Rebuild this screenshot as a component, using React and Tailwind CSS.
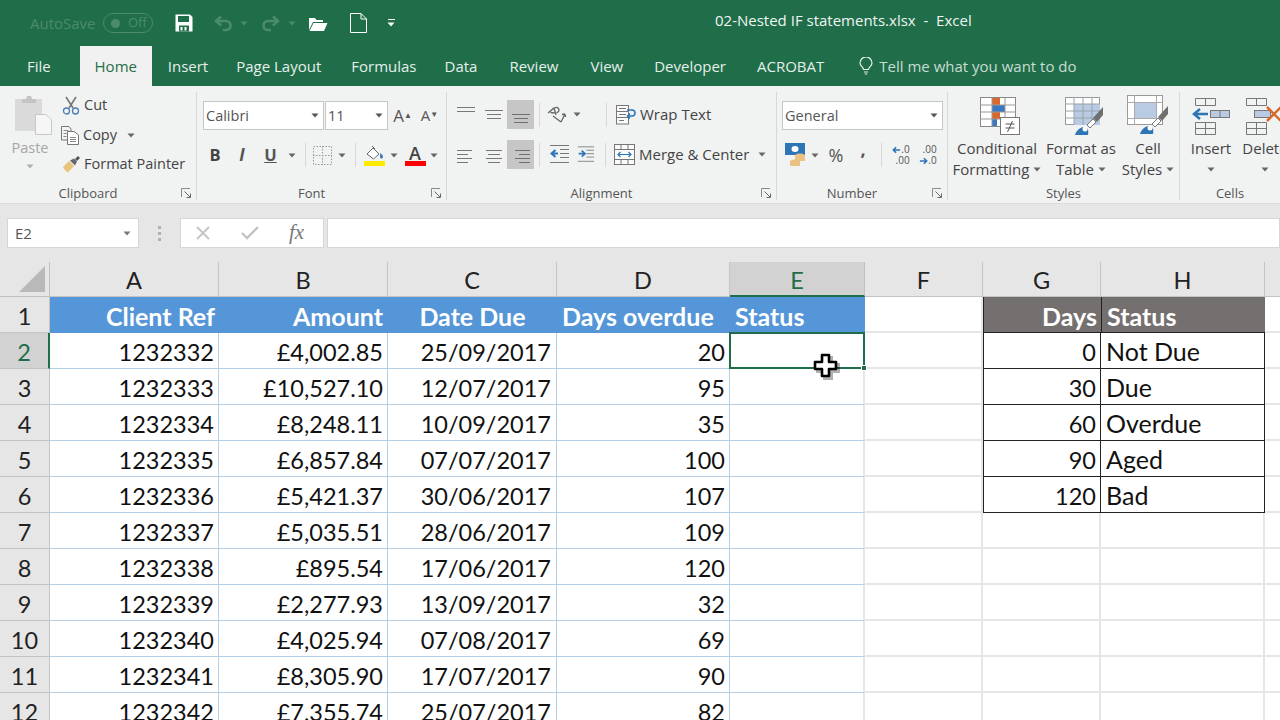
import React from "react";

const ui = { fontFamily: '"Open Sans", "Noto Sans", sans-serif' };
const sheet = { fontFamily: 'Lato, "Noto Sans", sans-serif' };

const Caret = ({ c = "#666", className = "" }) => (
  <svg width="8" height="5" viewBox="0 0 8 5" className={className}><path d="M0.5 0.5h7L4 4.5z" fill={c} /></svg>
);

const Launcher = () => (
  <svg width="11" height="11" viewBox="0 0 11 11" fill="none" stroke="#8a8a8a">
    <path d="M0.5 9V0.5H9" /><path d="M3.5 3.5L9 9M9.5 5.5V9.5H5.5" stroke="#666" />
  </svg>
);

const Group = ({ w, label, launcher = true, border = true, children }) => (
  <div className={`flex flex-col shrink-0 h-[108px] ${w} ${border ? "border-r border-[#d8d8d8]" : ""}`}>
    <div className="h-[90px]">{children}</div>
    <div className="flex h-[18px] pt-[4px] items-center">
      <div className="flex-1 text-center text-[13px] leading-[18px] text-[#555]">{label}</div>
      {launcher && <div className="w-[20px] flex justify-center"><Launcher /></div>}
    </div>
  </div>
);

const Slot = ({ w, children, className = "" }) => (
  <div className={`flex items-center justify-center shrink-0 h-full ${w} ${className}`}>{children}</div>
);

const Sep = ({ h = "h-[24px]" }) => <div className={`w-px ${h} bg-[#d8d8d8] shrink-0`} />;

const Lines = ({ rows, sel }) => (
  <svg width="20" height="20" viewBox="0 0 20 20" stroke={sel ? "#6f6f6f" : "#777"} strokeWidth="1">
    {rows.map(([x1, x2, y]) => <line key={y + "" + x1} x1={x1} x2={x2} y1={y + 0.5} y2={y + 0.5} />)}
  </svg>
);

const Save = () => (
  <svg width="18" height="18" viewBox="0 0 18 18">
    <path d="M0.5 0.5H15L17.5 3V17.5H0.5z" fill="#fff" />
    <rect x="3" y="2" width="11" height="6" fill="#1f6e49" />
    <rect x="4" y="11.5" width="10" height="6" fill="#1f6e49" />
    <rect x="5.5" y="13" width="2" height="3.5" fill="#fff" /><rect x="9.5" y="13" width="2" height="3.5" fill="#fff" />
  </svg>
);

const Undo = ({ flip }) => (
  <svg width="19" height="17" viewBox="0 0 19 17" fill="none" stroke="#4b8b6c" strokeWidth="2.6" className={flip ? "-scale-x-100" : ""}>
    <path d="M7 1.5L2 6l5 4.5" /><path d="M2.5 6H12c6 0 6 9 0 9H9" />
  </svg>
);

const Folder = () => (
  <svg width="20" height="17" viewBox="0 0 20 17">
    <path d="M1 15V3h6l1.5 2H15v2H5L1 15z" fill="#fff" /><path d="M5.5 8H19.5L16 16H1.5z" fill="#fff" />
  </svg>
);

const Doc = () => (
  <svg width="17" height="20" viewBox="0 0 17 20" fill="none" stroke="#fff" strokeWidth="1">
    <path d="M0.5 0.5H11L16.5 6V19.5H0.5z" /><path d="M11 0.5V6H16.5" />
  </svg>
);

const Bulb = () => (
  <svg width="14" height="18" viewBox="0 0 14 18" fill="none" stroke="#e8f0ec" strokeWidth="1.2">
    <path d="M4.5 12.5C4.5 10 1 9 1 6a6 6 0 0 1 12 0c0 3-3.5 4-3.5 6.500z" /><path d="M5 15h4M5.800 17h2.400" />
  </svg>
);

const PasteIcon = () => (
  <svg width="38" height="40" viewBox="0 0 38 40">
    <rect x="1" y="4" width="27" height="32" fill="#dadada" />
    <path d="M8 4h4l1-3h4l1 3h4v4H8z" fill="#c4c4c4" />
    <path d="M21.500 19.500H32l5.500 5.500V39.500H21.500z" fill="#f6f6f6" stroke="#c8c8c8" />
  </svg>
);

const Scissors = () => (
  <svg width="18" height="19" viewBox="0 0 18 19" fill="none">
    <path d="M4 1l7 11M14 1L7 12" stroke="#777" strokeWidth="1.600" />
    <circle cx="4.500" cy="15" r="3" stroke="#4a7ebb" strokeWidth="1.300" /><circle cx="13.500" cy="15" r="3" stroke="#4a7ebb" strokeWidth="1.300" />
  </svg>
);

const CopyIcon = () => (
  <svg width="18" height="19" viewBox="0 0 18 19" fill="none" stroke="#777">
    <path d="M0.500 0.500H8L10 3V14H0.500z" fill="#f3f3f3" />
    <path d="M6.500 5.500H13L17.500 9V18.500H6.500z" fill="#fff" />
    <path d="M2.500 4.500h5M2.500 7.500h3M2.500 10.500h3M9 11.500h6M9 13.500h6M9 15.500h6" stroke="#888" />
  </svg>
);

const Painter = () => (
  <svg width="19" height="17" viewBox="0 0 19 17">
    <path d="M1 11l6-6 5 5-6 6.500C4 16 2 13 1 11z" fill="#e8c47c" />
    <path d="M8 4.500l4-2 3 3-2 4z" fill="#666" /><path d="M13 3l3-3 2 2-3 3z" fill="#555" />
  </svg>
);

const BorderIcon = () => (
  <svg width="19" height="19" viewBox="0 0 19 19" fill="none" stroke="#999" strokeDasharray="1.500 1.500">
    <rect x="0.500" y="0.500" width="18" height="18" /><path d="M9.500 0v19M0 9.500h19" />
  </svg>
);

const FillIcon = () => (
  <svg width="21" height="21" viewBox="0 0 21 21">
    <path d="M3 9l6-6 6 6-5.500 5z" fill="#fff" stroke="#666" /><path d="M8 1l3 3" stroke="#666" />
    <path d="M16.500 8c2 2 2.500 3 2.500 4a1.500 1.500 0 0 1-3 0c0-1 0-2 .500-4z" fill="#3f78b8" />
    <rect x="0" y="16" width="21" height="5" fill="#ffea00" />
  </svg>
);

const FontColor = () => (
  <div className="flex flex-col items-center w-[21px]">
    <span className="text-[18px] leading-[16px] text-[#444] font-semibold">A</span>
    <div className="w-[21px] h-[5px] bg-[#ff0000]" />
  </div>
);

const Orient = () => (
  <svg width="20" height="20" viewBox="0 0 20 20" fill="none" stroke="#666" strokeWidth="1.300">
    <path d="M1 8l6-5 2 7M3.500 7.500l4 .5" /><path d="M8 3a2.500 2.500 0 0 1 3.500 3.500L9.500 8" />
    <path d="M6 11l8 6M14 17l4-8M18 9l-3 .5M18 9l.500 3" />
  </svg>
);

const WrapIcon = () => (
  <svg width="20" height="20" viewBox="0 0 20 20" fill="none" stroke="#777">
    <rect x="0.500" y="0.500" width="12" height="18.500" fill="#fafafa" />
    <path d="M0.500 6.500h12M0.500 12.500h12M3 3.500h7M3 9.500h7M3 15.500h5" />
    <path d="M11 5h5a2.500 2.500 0 0 1 0 6h-4M14 8.500L11.500 11l2.500 2.500" stroke="#2e75b6" strokeWidth="1.500" />
  </svg>
);

const MergeIcon = () => (
  <svg width="21" height="21" viewBox="0 0 21 21" fill="none" stroke="#777">
    <rect x="0.500" y="0.500" width="20" height="20" fill="#fafafa" />
    <path d="M0.500 5.500h20M0.500 15.500h20M7 0.500v5M14 0.500v5M7 15.500v5M14 15.500v5" />
    <path d="M4 10.500h13M6.500 8L4 10.500 6.500 13M14.500 8l2.500 2.500-2.500 2.500" stroke="#2e75b6" strokeWidth="1.200" />
  </svg>
);

const Indent = ({ flip }) => (
  <svg width="20" height="19" viewBox="0 0 20 19">
    <g stroke="#777"><path d="M1 0.500h19M11 4.500h9M11 8.500h9M11 12.500h9M1 17.500h19" /></g>
    <path d={flip ? "M2 8.500h6M5.500 5l4 3.500-4 3.500" : "M9 8.500H3M6.500 5l-4 3.500 4 3.500"} fill="none" stroke="#2e75b6" strokeWidth="2" />
  </svg>
);

const Accounting = () => (
  <svg width="22" height="24" viewBox="0 0 22 24">
    <rect x="0" y="0" width="20" height="12" fill="#2e75b6" /><ellipse cx="10" cy="6" rx="3.500" ry="3" fill="#fff" />
    <ellipse cx="15" cy="13" rx="5" ry="2.500" fill="#eac282" /><ellipse cx="10" cy="19" rx="5" ry="2.500" fill="#eac282" /><rect x="5" y="18" width="10" height="5" fill="#eac282" /><rect x="10" y="13" width="10" height="5" fill="#eac282" />
  </svg>
);

const Decimals = ({ inc }) => (
  <div className="flex flex-col items-end text-[10px] leading-[11px] text-[#555]">
    <div className="flex items-center h-[11px]">
      {inc && <svg width="9" height="8" viewBox="0 0 10 8"><path d="M9 4H2M4.500 1L1.500 4l3 3" fill="none" stroke="#2e75b6" strokeWidth="1.800" /></svg>}
      <div className="h-[11px] overflow-hidden">{inc ? ".0" : ".00"}</div>
    </div>
    <div className="flex items-center h-[11px]">
      {!inc && <svg width="9" height="8" viewBox="0 0 10 8"><path d="M1 4h7M5.500 1l3 3-3 3" fill="none" stroke="#2e75b6" strokeWidth="1.800" /></svg>}
      <div className="h-[11px] overflow-hidden">{inc ? ".00" : ".0"}</div>
    </div>
  </div>
);

const CondFmt = () => (
  <svg width="40" height="38" viewBox="0 0 40 38">
    <rect x="0.500" y="0.500" width="35" height="29" fill="#fff" stroke="#888" />
    <rect x="12" y="1" width="8" height="7" fill="#d9692b" /><rect x="12" y="8" width="13" height="7" fill="#3a78c2" /><rect x="12" y="15" width="8" height="7" fill="#d9692b" /><rect x="12" y="22" width="5" height="7" fill="#3a78c2" />
    <path d="M12 0.500v29M25 0.500v29M0 8h36M0 15h36M0 22h36" stroke="#999" fill="none" />
    <rect x="20.500" y="20.500" width="19" height="17" fill="#fff" stroke="#777" />
    <path d="M25.500 27h9M25.500 31h9M32.500 24l-5 11" stroke="#555" fill="none" />
  </svg>
);

const Brush = () => (
  <g>
    <path d="M10 38c1-4 5-8 9-8 3 0 5 2 4 8z" fill="#2e75b6" /><circle cx="20" cy="32" r="2.500" fill="#fff" />
    <path d="M22 28l6-6 3 3-6 6z" fill="#fff" stroke="#777" /><path d="M28 21l10-11v8l-6 7z" fill="#6f6f6f" />
  </g>
);

const FmtTable = () => (
  <svg width="40" height="38" viewBox="0 0 40 38">
    <rect x="0.500" y="0.500" width="34" height="27" fill="#fff" stroke="#999" />
    <rect x="9" y="7" width="26" height="21" fill="#b9cbe2" />
    <path d="M9 0v28M18 0v28M27 0v28M0 7h35M0 14h35M0 21h35" stroke="#9aa3ad" fill="none" />
    <Brush />
  </svg>
);

const CellStyle = () => (
  <svg width="42" height="40" viewBox="0 0 42 40">
    <rect x="0.500" y="0.500" width="35" height="29" fill="#fff" stroke="#999" />
    <rect x="8" y="8" width="22" height="15" fill="#b9cbe2" />
    <path d="M0 7.500h36M0 23.500h36M7.500 0v30M29.500 0v30" stroke="#aaa" fill="none" />
    <g transform="translate(3 1)"><Brush /></g>
  </svg>
);

const InsertIcon = () => (
  <svg width="38" height="37" viewBox="0 0 38 37" fill="none" stroke="#777">
    <path d="M3.500 0.500h20v7h-20zM13.500 0.500v7M3.500 24.500h20v12h-20zM13.500 24.500v12M3.500 30.500h20" />
    <rect x="18.500" y="12.500" width="19" height="7" fill="#b9cbe2" /><path d="M28 12.500v7" />
    <path d="M16 16H3M8 11L2 16l6 5" stroke="#2e75b6" strokeWidth="2.500" />
  </svg>
);

const DeleteIcon = () => (
  <svg width="40" height="37" viewBox="0 0 40 37" fill="none" stroke="#777">
    <path d="M1.500 0.500h20v7h-20zM11.500 0.500v7M1.500 24.500h20v12h-20zM11.500 24.500v12M1.500 30.500h20" />
    <rect x="9.500" y="12.500" width="16" height="7" fill="#b9cbe2" />
    <path d="M22 9l14 14M36 9L22 23" stroke="#d9692b" strokeWidth="2.500" />
  </svg>
);

const BigBtn = ({ w, icon, l1, l2, iconPad = "" }) => (
  <div className={`flex flex-col items-center shrink-0 ${w}`}>
    <div className={`h-[43px] flex items-end justify-center ${iconPad}`}>{icon}</div>
    <div className="text-[15px] leading-[21px] text-[#444] mt-[3px] whitespace-nowrap">{l1}</div>
    <div className="text-[15px] leading-[21px] text-[#444] whitespace-nowrap flex items-center gap-[4px] h-[21px]">
      {l2}<Caret />
    </div>
  </div>
);

const Box = ({ w, text, cw = "w-[16px]" }) => (
  <div className={`${w} h-[29px] shrink-0 bg-white border border-[#c6c6c6] flex items-center pl-[2px] text-[14.500px] text-[#555]`}>
    <span className="flex-1">{text}</span>
    <Slot w={cw}><Caret c="#555" /></Slot>
  </div>
);

const tabs = [
  ["File", "ml-[27px]"], ["Home", ""], ["Insert", "ml-[16px]"], ["Page Layout", "ml-[28px]"], ["Formulas", "ml-[30px]"],
  ["Data", "ml-[28px]"], ["Review", "ml-[32px]"], ["View", "ml-[32px]"], ["Developer", "ml-[31px]"], ["ACROBAT", "ml-[31px]"],
];

const TitleBar = () => (
  <div className="h-[46px] bg-[#1f6e49] flex items-center relative shrink-0">
    <span className="ml-[30px] text-[15px] text-[#4b8b6c] w-[73px]">AutoSave</span>
    <div className="w-[50px] h-[20px] rounded-full border border-[#4b8b6c] flex items-center pl-[7px] gap-[8px]">
      <span className="w-[9px] h-[9px] rounded-full bg-[#4b8b6c]" />
      <span className="text-[13px] text-[#4b8b6c]">Off</span>
    </div>
    <div className="ml-[22px]"><Save /></div>
    <div className="ml-[21px]"><Undo /></div>
    <Caret c="#4b8b6c" className="ml-[7px]" />
    <div className="ml-[13px]"><Undo flip /></div>
    <Caret c="#4b8b6c" className="ml-[8px]" />
    <div className="ml-[12px]"><Folder /></div>
    <div className="ml-[22px]"><Doc /></div>
    <div className="ml-[20px] flex flex-col items-center gap-[2px]">
      <div className="w-[7px] h-px bg-white" /><Caret c="#fff" />
    </div>
    <div className="absolute left-[715px] top-[10px] text-[15px] leading-[21px] text-[#f0f5f2] whitespace-pre">02-Nested IF statements.xlsx  -  Excel</div>
  </div>
);

const TabBar = () => (
  <div className="h-[40px] bg-[#1f6e49] flex shrink-0 text-[15px] text-[#e6efe9]">
    {tabs.map(([t, m]) =>
      t === "Home" ? (
        <div key={t} className="ml-[29px] w-[72px] bg-[#f1f1f1] text-[#1f6e49] flex items-center justify-center">{t}</div>
      ) : (
        <div key={t} className={`${m} flex items-center`}>{t}</div>
      )
    )}
    <div className="ml-[35px] flex items-center gap-[6px] text-[#c9dcd1]"><Bulb /><span>Tell me what you want to do</span></div>
  </div>
);

const Ribbon = () => (
  <div className="h-[118px] bg-[#f1f2f2] pt-[6px] flex overflow-hidden shrink-0 border-b border-[#dcdcdc]">
    <Group w="w-[197px]" label="Clipboard">
      <div className="flex">
        <div className="w-[60px] flex flex-col items-center">
          <div className="h-[43px] flex items-end pl-[6px]"><PasteIcon /></div>
          <span className="text-[14.500px] leading-[20px] mt-[3px] text-[#a6a6a6]">Paste</span>
          <Caret c="#b0b0b0" className="mt-[6px]" />
        </div>
        <div className="flex flex-col text-[14.500px] text-[#444]">
          <div className="h-[26px] flex items-center gap-[4px] ml-[2px]"><Scissors />Cut</div>
          <div className="h-[26px] mt-[4px] flex items-center gap-[4px] ml-[1px]"><CopyIcon />Copy<Caret className="ml-[6px]" /></div>
          <div className="h-[26px] mt-[3px] flex items-center gap-[3px] ml-[2px] whitespace-nowrap"><Painter />Format Painter</div>
        </div>
      </div>
    </Group>

    <Group w="w-[250px]" label="Font">
      <div className="pt-[9px] pl-[6px]">
        <div className="flex items-center h-[29px]">
          <Box w="w-[121px]" text="Calibri" />
          <div className="ml-[1px]"><Box w="w-[63px]" text="11" /></div>
          <Slot w="w-[27px]" className="ml-[1px]"><span className="text-[17px] text-[#555]">A<sup className="text-[8px]">▲</sup></span></Slot>
          <Slot w="w-[27px]"><span className="text-[15px] text-[#555]">A<sup className="text-[8px]">▼</sup></span></Slot>
        </div>
        <div className="flex items-center h-[28px] mt-[11px] text-[#444]">
          <Slot w="w-[24px]" className="text-[16.500px] font-bold">B</Slot>
          <Slot w="w-[30px]" className="text-[17px] italic font-bold text-[#555]">I</Slot>
          <Slot w="w-[27px]" className="text-[16.500px] underline font-bold text-[#555]">U</Slot>
          <Slot w="w-[16px]"><Caret /></Slot>
          <Slot w="w-[10px]"><Sep /></Slot>
          <Slot w="w-[25px]"><BorderIcon /></Slot>
          <Slot w="w-[14px]"><Caret /></Slot>
          <Slot w="w-[12px]"><Sep /></Slot>
          <Slot w="w-[27px]"><FillIcon /></Slot>
          <Slot w="w-[12px]"><Caret /></Slot>
          <Slot w="w-[30px]"><FontColor /></Slot>
          <Slot w="w-[8px]"><Caret /></Slot>
        </div>
      </div>
    </Group>

    <Group w="w-[330px]" label="Alignment">
      <div className="pt-[8px] pl-[5px]">
        <div className="flex items-center h-[29px]">
          <Slot w="w-[28px]"><Lines rows={[[1, 19, 2], [1, 19, 6]]} /></Slot>
          <Slot w="w-[27px]"><Lines rows={[[1, 19, 5], [3, 17, 9], [3, 17, 13]]} /></Slot>
          <Slot w="w-[27px]" className="bg-[#c6c6c6]"><Lines sel rows={[[1, 19, 9], [3, 17, 13], [3, 17, 17]]} /></Slot>
          <Slot w="w-[5px]" />
          <Sep />
          <Slot w="w-[33px]"><Orient /></Slot>
          <Caret />
          <Slot w="w-[25px]" />
          <Sep />
          <Slot w="w-[9px]" />
          <WrapIcon />
          <span className="ml-[4px] text-[15px] text-[#444] whitespace-nowrap">Wrap Text</span>
        </div>
        <div className="flex items-center h-[29px] mt-[11px]">
          <Slot w="w-[28px]"><Lines rows={[[1, 16, 5], [1, 12, 9], [1, 16, 13], [1, 12, 17]]} /></Slot>
          <Slot w="w-[27px]"><Lines rows={[[2, 18, 5], [4, 16, 9], [2, 18, 13], [4, 16, 17]]} /></Slot>
          <Slot w="w-[27px]" className="bg-[#c6c6c6]"><Lines sel rows={[[4, 19, 5], [8, 19, 9], [4, 19, 13], [8, 19, 17]]} /></Slot>
          <Slot w="w-[5px]" />
          <Sep />
          <Slot w="w-[37px]"><Indent /></Slot>
          <Slot w="w-[19px]" className="pr-[2px]"><Indent flip /></Slot>
          <Slot w="w-[9px]" />
          <Sep />
          <Slot w="w-[8px]" />
          <MergeIcon />
          <span className="ml-[4px] text-[15px] text-[#444] whitespace-nowrap">Merge &amp; Center</span>
          <Caret className="ml-[9px]" />
        </div>
      </div>
    </Group>

    <Group w="w-[171px]" label="Number">
      <div className="pt-[9px] pl-[5px]">
        <Box w="w-[161px]" text="General" />
        <div className="flex items-center h-[28px] mt-[11px] text-[#555]">
          <Slot w="w-[27px]"><Accounting /></Slot>
          <Slot w="w-[12px]"><Caret /></Slot>
          <Slot w="w-[30px]" className="text-[18px]">%</Slot>
          <Slot w="w-[24px]" className="text-[18px] font-bold pb-[12px]">,</Slot>
          <Slot w="w-[12px]"><Sep /></Slot>
          <Slot w="w-[28px]"><Decimals inc /></Slot>
          <Slot w="w-[26px]"><Decimals /></Slot>
        </div>
      </div>
    </Group>

    <Group w="w-[232px]" label="Styles" launcher={false}>
      <div className="flex">
        <BigBtn w="w-[98px]" iconPad="pl-[6px]" icon={<CondFmt />} l1="Conditional" l2="Formatting" />
        <BigBtn w="w-[72px] -ml-[1px]" iconPad="pl-[8px]" icon={<FmtTable />} l1="Format as" l2="Table" />
        <BigBtn w="w-[62px]" icon={<CellStyle />} l1="Cell" l2="Styles" />
      </div>
    </Group>

    <Group w="w-[100px]" label="Cells" launcher={false} border={false}>
      <div className="flex pl-[3px]">
        <BigBtn w="w-[56px]" icon={<InsertIcon />} l1="Insert" l2="" />
        <BigBtn w="w-[52px]" icon={<DeleteIcon />} l1="Delete" l2="" />
      </div>
    </Group>
  </div>
);

const FormulaBar = () => (
  <div className="h-[58px] bg-[#e6e6e6] flex pt-[14px] pl-[7px] shrink-0 text-[#555]">
    <div className="w-[132px] h-[30px] bg-white border border-[#d6d6d6] flex items-center pl-[7px] text-[15px]">
      <span className="flex-1">E2</span>
      <Slot w="w-[22px]"><Caret c="#777" /></Slot>
    </div>
    <div className="w-[41px] h-[30px] flex flex-col items-center justify-center gap-[3px]">
      <i className="w-[3px] h-[3px] bg-[#b0b0b0]" /><i className="w-[3px] h-[3px] bg-[#b0b0b0]" /><i className="w-[3px] h-[3px] bg-[#b0b0b0]" />
    </div>
    <div className="w-[144px] h-[30px] bg-white border border-[#d6d6d6] flex items-center pl-[14px] gap-[30px]">
      <svg width="16" height="14" viewBox="0 0 16 14" fill="none" stroke="#c4c4c4" strokeWidth="1.800"><path d="M2 1l12 12M14 1L2 13" /></svg>
      <svg width="18" height="14" viewBox="0 0 18 14" fill="none" stroke="#c4c4c4" strokeWidth="2.400"><path d="M1 7l5 5L17 1" /></svg>
      <span className="text-[21px] italic text-[#777]" style={{ fontFamily: '"Liberation Serif", serif' }}>fx</span>
    </div>
    <div className="ml-[3px] flex-1 h-[30px] bg-white border border-[#d6d6d6]" />
  </div>
);

const columns = [
  ["A", "w-[169px]"], ["B", "w-[169px]"], ["C", "w-[169px]"], ["D", "w-[173px]"], ["E", "w-[135px]"],
  ["F", "w-[118px]"], ["G", "w-[118px]"], ["H", "w-[164px]"],
];

const ColHeaders = () => (
  <div className="flex h-[35px] bg-[#e6e6e6] shrink-0">
    <div className="w-[50px] shrink-0 border-r border-b border-[#c0c0c0] flex items-end justify-end pr-[4px] pb-[4px]">
      <svg width="26" height="26" viewBox="0 0 26 26"><path d="M26 0V26H0z" fill="#b9b9b9" /></svg>
    </div>
    {columns.map(([c, w]) => (
      <div key={c} className={`${w} shrink-0 flex items-center justify-center pt-[4px] ${c === "E" ? "bg-[#d2d2d2] text-[#1f6e49] border-b-2 border-b-[#1f6e49] border-r border-r-[#c0c0c0]" : "text-[#222] border-r border-b border-[#c4c4c4]"}`}>{c}</div>
    ))}
    <div className="flex-1 border-b border-[#c4c4c4]" />
  </div>
);

const data = [
  ["1232332", "£4,002.85", "25/09/2017", "20"],
  ["1232333", "£10,527.10", "12/07/2017", "95"],
  ["1232334", "£8,248.11", "10/09/2017", "35"],
  ["1232335", "£6,857.84", "07/07/2017", "100"],
  ["1232336", "£5,421.37", "30/06/2017", "107"],
  ["1232337", "£5,035.51", "28/06/2017", "109"],
  ["1232338", "£895.54", "17/06/2017", "120"],
  ["1232339", "£2,277.93", "13/09/2017", "32"],
  ["1232340", "£4,025.94", "07/08/2017", "69"],
  ["1232341", "£8,305.90", "17/07/2017", "90"],
  ["1232342", "£7,355.74", "25/07/2017", "82"],
];

const lookup = [["0", "Not Due"], ["30", "Due"], ["60", "Overdue"], ["90", "Aged"], ["120", "Bad"]];

const RowHead = ({ n, sel }) => (
  <div className={`w-[50px] shrink-0 flex items-center justify-center pt-[4px] ${sel ? "bg-[#d2d2d2] text-[#1f6e49] border-r-2 border-r-[#1f6e49] border-b border-b-[#c4c4c4]" : "bg-[#e6e6e6] text-[#222] border-r border-b border-[#c4c4c4]"}`}>{n}</div>
);

const blue = "border-r border-b border-[#b4cfe8]";
const grey = "border-r-2 border-b-2 border-[#e6e6e6]";
const black = "border-r border-b border-[#222]";

const HeaderRow = () => (
  <div className="flex h-[36px] shrink-0">
    <RowHead n="1" />
    <div className="flex shrink-0 text-[25px] font-bold text-white bg-[#5596d8]">
      <div className="w-[169px] flex items-center justify-end pr-[4px] pt-[4px]">Client Ref</div>
      <div className="w-[169px] flex items-center justify-end pr-[5px] pt-[4px]">Amount</div>
      <div className="w-[169px] flex items-center justify-center pt-[4px]">Date Due</div>
      <div className="w-[173px] flex items-center pl-[5px] pt-[4px] whitespace-nowrap">Days overdue</div>
      <div className="w-[135px] flex items-center pl-[5px] pt-[4px]">Status</div>
    </div>
    <div className={`w-[118px] shrink-0 ${grey}`} />
    <div className="w-[118px] shrink-0 bg-[#757070] text-[25px] text-white font-bold flex items-center justify-end pr-[4px] pt-[4px] border-l border-b border-[#222]">Days</div>
    <div className="w-[164px] shrink-0 bg-[#757070] text-[25px] text-white font-bold flex items-center pl-[5px] pt-[4px] border-l border-b border-[#222]">Status</div>
    <div className="flex-1 border-b-2 border-[#e6e6e6]" />
  </div>
);

const Row = ({ r, i }) => {
  const lk = lookup[i];
  return (
    <div className="flex h-[36px] shrink-0 text-[#111]">
      <RowHead n={i + 2} sel={i === 0} />
      <div className={`w-[169px] shrink-0 flex items-center justify-end pr-[4px] pt-[4px] ${blue}`}>{r[0]}</div>
      <div className={`w-[169px] shrink-0 flex items-center justify-end pr-[4px] pt-[4px] ${blue}`}>{r[1]}</div>
      <div className={`w-[169px] shrink-0 flex items-center justify-end pr-[5px] pt-[4px] ${blue}`}>{r[2]}</div>
      <div className={`w-[173px] shrink-0 flex items-center justify-end pr-[4px] pt-[4px] ${blue}`}>{r[3]}</div>
      {i === 0 ? (
        <div className="w-[136px] -ml-px h-[37px] -mt-px shrink-0 border-2 border-[#1f6e49] relative">
          <div className="absolute -right-[4px] -bottom-[4px] w-[6px] h-[6px] bg-[#1f6e49] border border-white" />
        </div>
      ) : (
        <div className="w-[135px] shrink-0 border-b border-[#b4cfe8] border-r-2 border-r-[#e6e6e6]" />
      )}
      <div className={`w-[118px] shrink-0 ${grey}`} />
      {lk ? (
        <>
          <div className={`w-[118px] shrink-0 flex items-center justify-end pr-[4px] pt-[4px] border-l ${black}`}>{lk[0]}</div>
          <div className={`w-[164px] shrink-0 flex items-center pl-[5px] pt-[2px] text-[25px] ${black}`}>{lk[1]}</div>
        </>
      ) : (
        <>
          <div className={`w-[118px] shrink-0 ${grey}`} />
          <div className={`w-[164px] shrink-0 ${grey}`} />
        </>
      )}
      <div className="flex-1 border-b-2 border-[#e6e6e6]" />
    </div>
  );
};

const PlusCursor = () => (
  <svg width="30" height="30" viewBox="0 0 30 30" className="absolute left-[812px] top-[351px]">
    <path d="M10 4h7v7h7v7h-7v7h-7v-7H3v-7h7z" fill="#000" stroke="#000" strokeWidth="3" opacity="0.3" transform="translate(2.500 2.500)" />
    <path d="M10 4h7v7h7v7h-7v7h-7v-7H3v-7h7z" fill="#fff" stroke="#000" strokeWidth="2.600" strokeLinejoin="round" />
  </svg>
);

export default function App() {
  return (
    <div className="relative w-[1280px] h-[720px] overflow-hidden bg-white flex flex-col" style={ui}>
      <TitleBar />
      <TabBar />
      <Ribbon />
      <FormulaBar />
      <div className="flex flex-col text-[23.500px]" style={sheet}>
        <ColHeaders />
        <HeaderRow />
        {data.map((r, i) => <Row key={r[0]} r={r} i={i} />)}
      </div>
      <PlusCursor />
    </div>
  );
}
